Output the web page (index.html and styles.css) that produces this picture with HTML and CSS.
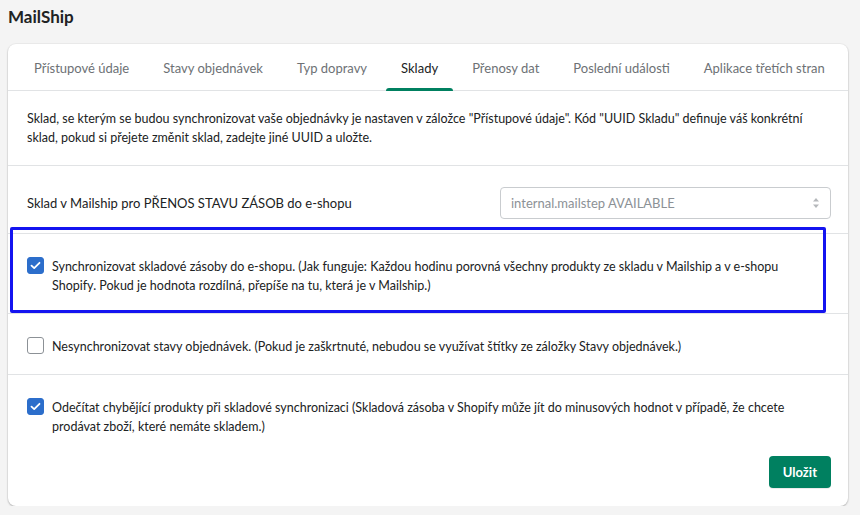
FILE: index.html
```html
<!DOCTYPE html>
<html lang="cs">
<head>
    <meta charset="UTF-8">
    <meta name="viewport" content="width=device-width, initial-scale=1.0">
    <title>MailShip</title>
    <link rel="stylesheet" href="styles.css">
</head>
<body>

    <h1 class="page-title">MailShip</h1>

    <div class="card">
        <!-- Tabs -->
        <ul class="tabs">
            <li class="tab">Přístupové údaje</li>
            <li class="tab">Stavy objednávek</li>
            <li class="tab">Typ dopravy</li>
            <li class="tab active">Sklady</li>
            <li class="tab">Přenosy dat</li>
            <li class="tab">Poslední události</li>
            <li class="tab">Aplikace třetích stran</li>
        </ul>

        <div class="section section-info">
            <p class="info">Sklad, se kterým se budou synchronizovat vaše objednávky je nastaven v záložce "Přístupové údaje". Kód "UUID Skladu" definuje váš konkrétní sklad, pokud si přejete změnit sklad, zadejte jiné UUID a uložte.</p>
        </div>

        <div class="section section-select">
            <span class="field-label">Sklad v Mailship pro PŘENOS STAVU ZÁSOB do e-shopu</span>
            <div class="select">
                <span>internal.mailstep AVAILABLE</span>
                <svg class="select-arrows" width="8" height="12" viewBox="0 0 8 12">
                    <path d="M4 1 L7 4.5 H1 Z" fill="#b5b8bb"/>
                    <path d="M4 11 L7 7.5 H1 Z" fill="#b5b8bb"/>
                </svg>
            </div>
        </div>

        <div class="section section-check highlighted">
            <label class="check">
                <span class="box checked">
                    <svg width="11" height="9" viewBox="0 0 11 9"><path d="M1.5 4.6 L4.2 7.1 L9.5 1.8" fill="none" stroke="#fff" stroke-width="1.8" stroke-linecap="round" stroke-linejoin="round"/></svg>
                </span>
                <span class="check-text">Synchronizovat skladové zásoby do e-shopu. (Jak funguje: Každou hodinu porovná všechny produkty ze skladu v Mailship a v e-shopu Shopify. Pokud je hodnota rozdílná, přepíše na tu, která je v Mailship.)</span>
            </label>
            <div class="highlight-frame"></div>
        </div>

        <div class="section section-check">
            <label class="check">
                <span class="box"></span>
                <span class="check-text">Nesynchronizovat stavy objednávek. (Pokud je zaškrtnuté, nebudou se využívat štítky ze záložky Stavy objednávek.)</span>
            </label>
        </div>

        <div class="section section-check last">
            <label class="check">
                <span class="box checked">
                    <svg width="11" height="9" viewBox="0 0 11 9"><path d="M1.5 4.6 L4.2 7.1 L9.5 1.8" fill="none" stroke="#fff" stroke-width="1.8" stroke-linecap="round" stroke-linejoin="round"/></svg>
                </span>
                <span class="check-text">Odečítat chybějící produkty při skladové synchronizaci (Skladová zásoba v Shopify může jít do minusových hodnot v případě, že chcete prodávat zboží, které nemáte skladem.)</span>
            </label>
            <div class="actions">
                <button class="button">Uložit</button>
            </div>
        </div>
    </div>

</body>
</html>
```

FILE: styles.css
```css
body {
    font-family: 'Lato', 'Open Sans', sans-serif;
    font-size: 12.5px;
    color: #202223;
    background-color: #f4f4f4;
    margin: 0;
    padding: 0 12px 0 8px;
}
.page-title {
    font-size: 17px;
    font-weight: 700;
    margin: 0;
    padding-top: 5px;
    line-height: 24px;
    height: 39px;
}
.card {
    background: #fff;
    border-radius: 8px;
    box-shadow: 0 1px 2px rgba(0, 0, 0, 0.25), 0 0 0 1px rgba(0, 0, 0, 0.03);
}
.tabs {
    display: flex;
    list-style: none;
    margin: 0;
    padding: 0 0 0 9px;
    border-bottom: 1px solid #e1e3e5;
    height: 46px;
}
.tab {
    padding: 0 17px;
    line-height: 48px;
    font-size: 13px;
    white-space: nowrap;
    color: #6d7175;
    cursor: pointer;
    position: relative;
}
.tab.active {
    color: #202223;
}
.tab.active::after {
    content: "";
    position: absolute;
    left: 2px;
    right: 2px;
    bottom: -1px;
    height: 3px;
    background: #008060;
    border-radius: 3px 3px 0 0;
}
.section {
    border-bottom: 1px solid #e1e3e5;
    padding: 18px 19px;
    position: relative;
}
.section.last {
    border-bottom: none;
}
.section-info {
    padding-right: 12px;
}
.info {
    margin: 0;
    line-height: 19px;
}
.section-select {
    display: flex;
    align-items: center;
    justify-content: space-between;
    padding: 21px 17px 14px 19px;
}
.field-label {
    font-size: 13px;
}
.select {
    width: 331px;
    height: 32px;
    box-sizing: border-box;
    border: 1px solid #c9cccf;
    border-radius: 4px;
    display: flex;
    align-items: center;
    justify-content: space-between;
    padding: 0 10px 0 10px;
    color: #8c9196;
    font-size: 13px;
}
.section-check {
    padding: 23px 19px 18px;
}
.check {
    display: flex;
    align-items: flex-start;
    gap: 8px;
    line-height: 19px;
    cursor: pointer;
}
.check-text {
    max-width: 750px;
}
.box {
    flex: none;
    width: 17px;
    height: 17px;
    box-sizing: border-box;
    border: 1px solid #8c9196;
    border-radius: 3px;
    display: flex;
    align-items: center;
    justify-content: center;
}
.box.checked {
    background: #2c6ecb;
    border-color: #2c6ecb;
}
.highlighted .highlight-frame {
    position: absolute;
    top: -7px;
    left: 2px;
    right: 22px;
    bottom: 0;
    border: 3px solid #1414f0;
    border-radius: 2px;
    pointer-events: none;
}
.actions {
    display: flex;
    justify-content: flex-end;
    margin-top: 20px;
}
.button {
    font-family: inherit;
    background-color: #008060;
    color: #fff;
    font-size: 13px;
    font-weight: 700;
    border: none;
    border-radius: 4px;
    height: 32px;
    padding: 0 14px;
    margin-right: -2px;
    cursor: pointer;
    box-shadow: 0 1px 0 rgba(0, 0, 0, 0.08);
}
.button:hover {
    background-color: #006e52;
}
```
